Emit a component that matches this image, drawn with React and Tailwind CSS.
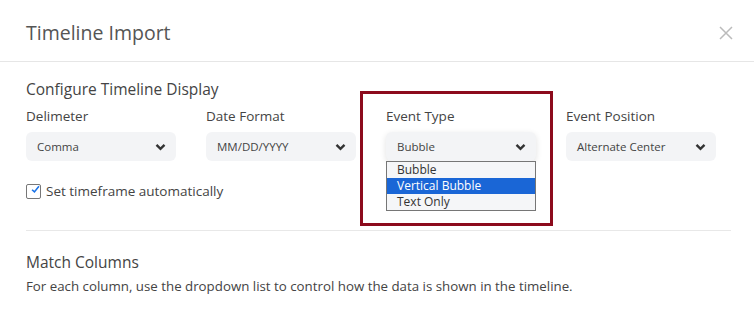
import React from "react";

const Chevron = () => (
  <svg width="11" height="8" viewBox="0 0 11 8" className="shrink-0">
    <path d="M1.5 1.8 L5.5 5.8 L9.5 1.8" fill="none" stroke="#333" strokeWidth="2.4" />
  </svg>
);

const FakeSelect = ({ value, focused }) => (
  <div
    className={`flex items-center justify-between h-[29px] w-[150px] rounded-md bg-[#f3f4f6] pl-[11px] pr-[10px] text-[11.5px] text-[#444] ${
      focused ? "shadow-[0_2px_6px_rgba(0,0,0,0.12)]" : ""
    }`}
  >
    <span>{value}</span>
    <Chevron />
  </div>
);

const fields = [
  { label: "Delimeter", value: "Comma" },
  { label: "Date Format", value: "MM/DD/YYYY" },
  { label: "Event Type", value: "Bubble", open: true },
  { label: "Event Position", value: "Alternate Center" },
];

const App = () => {
  return (
    <div className="w-[754px] h-[315px] overflow-hidden bg-white font-['Open_Sans',sans-serif] text-[#444]">
      {/* Header */}
      <div className="flex items-center justify-between h-[62px] px-[26px] border-b border-[#e6e6e6]">
        <h2 className="text-[19.5px] text-[#555] pt-[4px]">Timeline Import</h2>
        <svg width="14" height="14" viewBox="0 0 14 14" className="mr-[-5px] mt-[4px]">
          <path d="M1 1 L13 13 M13 1 L1 13" stroke="#bbb" strokeWidth="1.5" />
        </svg>
      </div>

      {/* Body */}
      <div className="px-[26px]">
        <h3 className="text-[15.5px] leading-[22px] mt-[16px]">Configure Timeline Display</h3>

        <div className="grid grid-cols-4 gap-x-[30px] w-[690px] mt-[6px]">
          {fields.map((f) => (
            <div key={f.label} className="relative">
              <div className="text-[13.5px] leading-[20px] mb-[6px]">{f.label}</div>
              <FakeSelect value={f.value} focused={f.open} />
              {f.open && (
                <>
                  <div className="absolute left-0 top-[55px] w-[150px] border border-[#767676] bg-[#f5f6f8] text-[12px] leading-[16px] text-[#333]">
                    <div className="px-[10px]">Bubble</div>
                    <div className="px-[10px] bg-[#1a66d6] text-white">Vertical Bubble</div>
                    <div className="px-[10px]">Text Only</div>
                  </div>
                  <div className="absolute left-[-26px] top-[-15px] w-[193px] h-[135px] border-[3px] border-[#8c0a1c] pointer-events-none" />
                </>
              )}
            </div>
          ))}
        </div>

        <label className="flex items-center gap-[5px] mt-[20px] text-[13.5px] leading-[20px]">
          <span className="flex items-center justify-center w-[15px] h-[15px] border border-[#777] rounded-[2px] bg-white">
            <svg width="17" height="15" viewBox="0 0 17 15" className="ml-[4px] mt-[-4px]">
              <path d="M2 8 L6.5 12 L15 1.5" fill="none" stroke="#1a73e8" strokeWidth="3" />
            </svg>
          </span>
          Set timeframe automatically
        </label>

        <div className="border-t border-[#e8e8e8] mt-[29px] mr-[-3px]" />

        <h3 className="text-[15.5px] leading-[22px] mt-[20px]">Match Columns</h3>
        <p className="text-[13.3px] leading-[20px] mt-[3px]">
          For each column, use the dropdown list to control how the data is shown in the timeline.
        </p>
      </div>
    </div>
  );
};

export default App;
